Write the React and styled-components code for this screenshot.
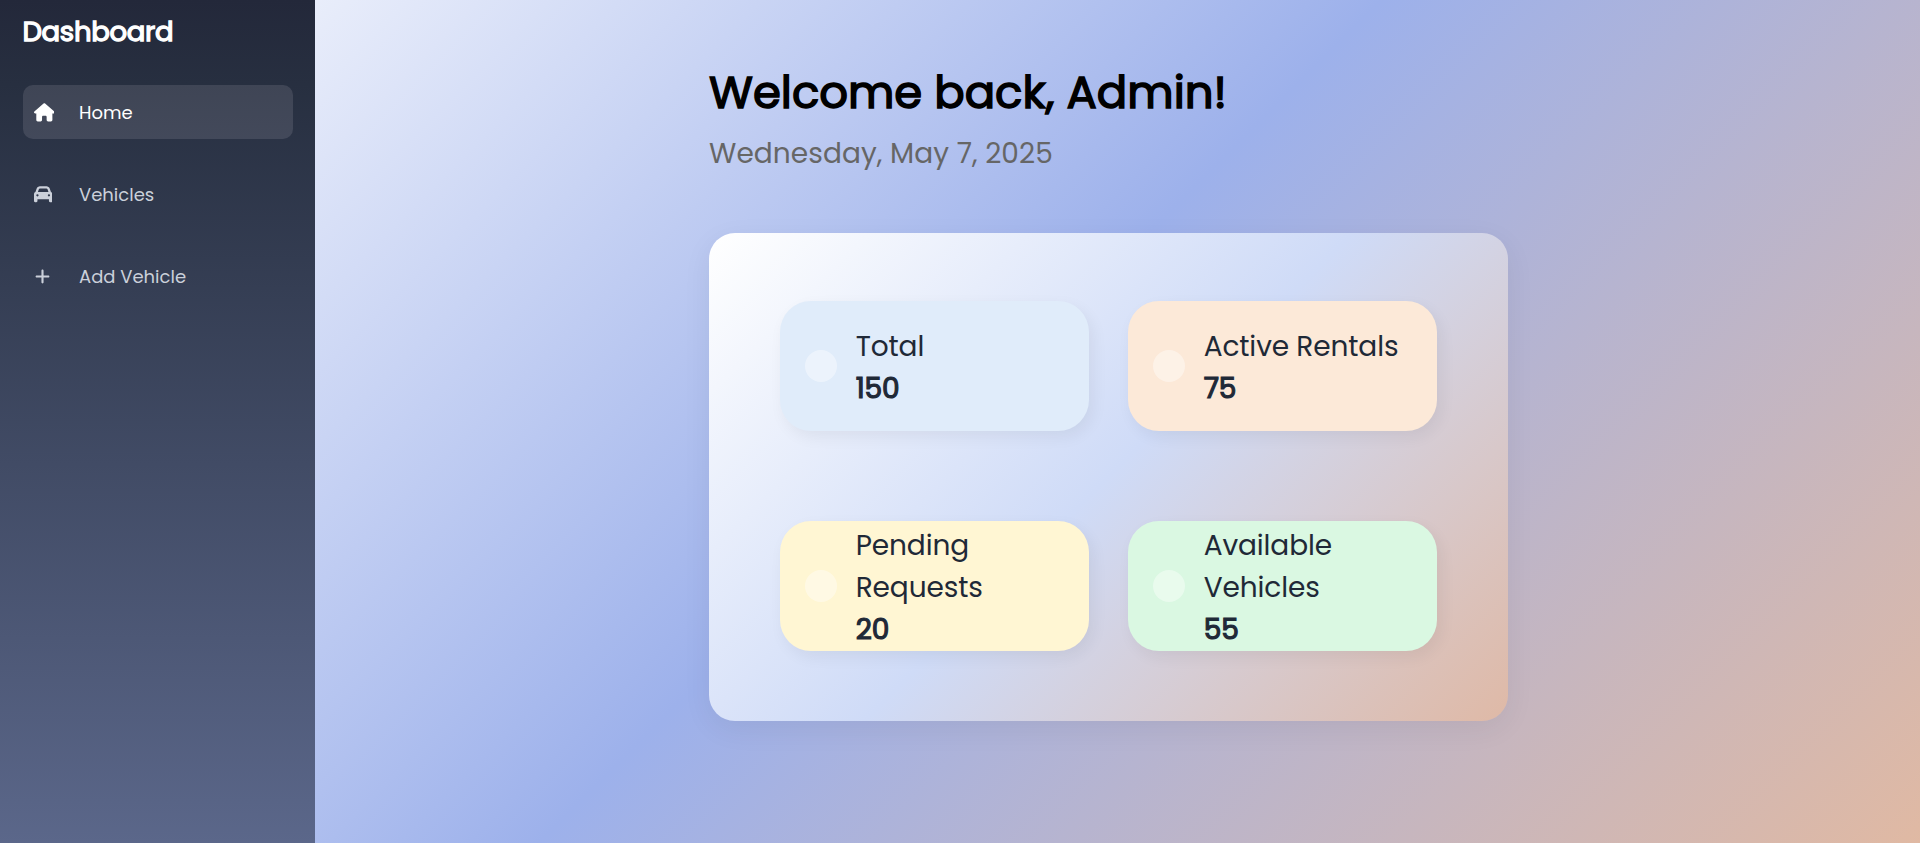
import React from "react";
import styled, { createGlobalStyle } from "styled-components";
import { FaHouse, FaCar, FaPlus } from "react-icons/fa6";

const Global = createGlobalStyle`
  * { box-sizing: border-box; }
  body {
    margin: 0;
    font-family: Poppins, Inter, sans-serif;
  }
`;

const Page = styled.div`
  display: flex;
  height: 843px;
  overflow: hidden;
  background: linear-gradient(135deg, #ffffff 0%, #9db1eb 50%, #e0b9a3 100%);
`;

const Sidebar = styled.aside`
  width: 315px;
  flex: none;
  padding: 11px 22px 0 23px;
  background: linear-gradient(180deg, #23283a 0%, #272f40 10%, #5b678a 100%);
`;

const Brand = styled.h2`
  margin: 0 0 0 -0.6px;
  height: 42px;
  line-height: 42px;
  font-size: 27.5px;
  font-weight: 400;
  letter-spacing: -0.3px;
  -webkit-text-stroke: 1.3px currentColor;
  color: #fff;
`;

const Nav = styled.nav`
  display: flex;
  flex-direction: column;
  gap: 28px;
  margin-top: 32px;
`;

const NavItem = styled.a`
  display: flex;
  align-items: center;
  height: 54px;
  padding-left: 10px;
  border-radius: 10px;
  font-size: 18px;
  color: ${(p) => (p.$active ? "#fff" : "#cbd0da")};
  background: ${(p) => (p.$active ? "rgba(255, 250, 255, 0.115)" : "transparent")};
`;

const NavIcon = styled.span`
  display: flex;
  width: 46px;
  padding-left: 0.5px;
  flex: none;

  svg {
    width: ${(p) => p.$width}px;
    height: ${(p) => p.$width}px;
  }
`;

const Main = styled.main`
  flex: 1;
  padding: 63px 0 0 394px;
`;

const Title = styled.h1`
  margin: 0;
  height: 60px;
  line-height: 60px;
  font-size: 45px;
  font-weight: 400;
  -webkit-text-stroke: 1.5px currentColor;
  white-space: nowrap;
  color: #000;
`;

const DateLine = styled.p`
  margin: 10px 0 0;
  height: 42px;
  line-height: 42px;
  font-size: 28px;
  letter-spacing: 0.08px;
  white-space: nowrap;
  color: #666;
`;

const Panel = styled.section`
  display: grid;
  grid-template-columns: 309.4px 309.4px;
  grid-auto-rows: 130.4px;
  gap: 89.6px 38.6px;
  width: 799px;
  height: 488px;
  margin-top: 58px;
  padding: 68px 70.8px;
  border-radius: 26px;
  background: linear-gradient(135deg, #ffffff 0%, #cfdbf7 50%, #dfb9a6 100%);
  box-shadow: 0 8px 30px rgba(0, 0, 0, 0.06);
`;

const Stat = styled.article`
  display: flex;
  align-items: center;
  padding-left: 25px;
  border-radius: 31px;
  background: ${(p) => p.$tone};
  box-shadow: 4px 6px 16px rgba(0, 0, 0, 0.06);
`;

const Dot = styled.span`
  width: 32.5px;
  height: 32.5px;
  flex: none;
  margin-right: 18.4px;
  border-radius: 50%;
  background: rgba(255, 255, 255, 0.4);
`;

const StatText = styled.div`
  padding-top: 3px;
  font-size: 28px;
  line-height: 42px;
  letter-spacing: -0.12px;
  color: #1f2937;
`;

const Label = styled.div`
  white-space: nowrap;
`;

const Value = styled.div`
  -webkit-text-stroke: 1.2px currentColor;
`;

const navItems = [
  { label: "Home", Icon: FaHouse, width: 20.7, active: true },
  { label: "Vehicles", Icon: FaCar, width: 18.4 },
  { label: "Add Vehicle", Icon: FaPlus, width: 17 },
];

const stats = [
  { lines: ["Total"], value: "150", tone: "#e0ecfa" },
  { lines: ["Active Rentals"], value: "75", tone: "#fce9d8" },
  { lines: ["Pending", "Requests"], value: "20", tone: "#fff6d3" },
  { lines: ["Available", "Vehicles"], value: "55", tone: "#daf8e2" },
];

export default function App() {
  return (
    <>
      <Global />
      <Page>
        <Sidebar>
          <Brand>Dashboard</Brand>
          <Nav>
            {navItems.map(({ label, Icon, width, active }) => (
              <NavItem key={label} $active={active}>
                <NavIcon $width={width}>
                  <Icon />
                </NavIcon>
                {label}
              </NavItem>
            ))}
          </Nav>
        </Sidebar>
        <Main>
          <Title>Welcome back, Admin!</Title>
          <DateLine>Wednesday, May 7, 2025</DateLine>
          <Panel>
            {stats.map((stat) => (
              <Stat key={stat.value} $tone={stat.tone}>
                <Dot />
                <StatText>
                  {stat.lines.map((text) => (
                    <Label key={text}>{text}</Label>
                  ))}
                  <Value>{stat.value}</Value>
                </StatText>
              </Stat>
            ))}
          </Panel>
        </Main>
      </Page>
    </>
  );
}
